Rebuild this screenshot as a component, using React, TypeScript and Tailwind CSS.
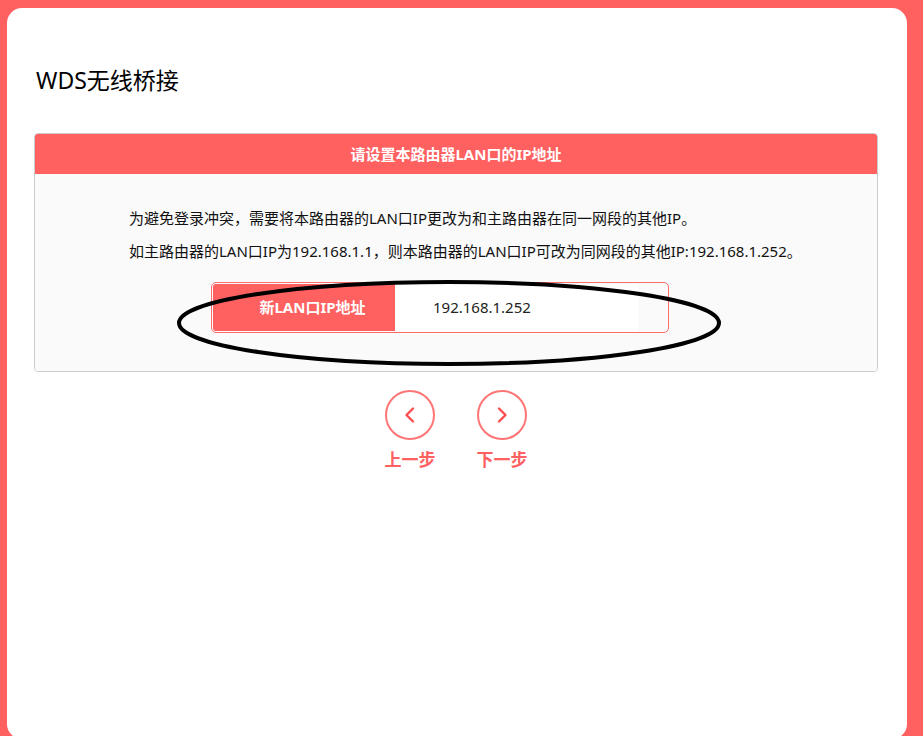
import React from "react";

const font = { fontFamily: '"Noto Sans", "Noto Sans CJK SC", sans-serif' };

function CircleBtn({ dir, label }: { dir: "left" | "right"; label: string }) {
  return (
    <div className="flex flex-col items-center">
      <div className="w-[50px] h-[50px] rounded-full border-2 border-[#ff7575] flex items-center justify-center">
        <svg width="20" height="20" viewBox="0 0 20 20" fill="none">
          {dir === "left" ? (
            <path d="M13 3.5 L6.5 10 L13 16.5" stroke="#ff4d4d" strokeWidth="2.4" strokeLinecap="round" strokeLinejoin="round" />
          ) : (
            <path d="M7 3.5 L13.5 10 L7 16.5" stroke="#ff4d4d" strokeWidth="2.4" strokeLinecap="round" strokeLinejoin="round" />
          )}
        </svg>
      </div>
      <div className="mt-[8px] text-[17px] font-bold leading-[24px] text-[#ff6161]">{label}</div>
    </div>
  );
}

export default function App() {
  return (
    <div className="h-[736px] overflow-hidden bg-[#ff6161] pt-[8px] pl-[7px] pr-[16px]" style={font}>
      <div className="h-[731px] rounded-[15px] bg-white pt-[52px] pl-[27px] pr-[29px]">
        <div className="text-[23px] leading-[40px] text-black pl-[2px]">WDS无线桥接</div>
        <div className="mt-[33px] rounded-[4px] border border-[#cccccc] overflow-hidden">
          <div className="h-[40px] bg-[#ff6161] flex items-center justify-center text-white font-bold text-[15px]">
            请设置本路由器LAN口的IP地址
          </div>
          <div className="bg-[#fafafa] pt-[28px] pb-[38px]">
            <div className="pl-[94px] text-[15px] leading-[33px] text-[#111]">
              <div>为避免登录冲突，需要将本路由器的LAN口IP更改为和主路由器在同一网段的其他IP。</div>
              <div>如主路由器的LAN口IP为192.168.1.1，则本路由器的LAN口IP可改为同网段的其他IP:192.168.1.252。</div>
            </div>
            <div className="relative ml-[176px] mt-[14px] w-[458px] h-[51px] rounded-[5px] border border-[#ff6a6a] p-[1px] flex">
              <div className="w-[182px] h-full bg-[#ff6161] rounded-l-[3px] flex items-center justify-center pl-[17px] text-white font-bold text-[15px]">
                新LAN口IP地址
              </div>
              <div className="w-[243px] h-full bg-white flex items-center pl-[38px] text-[15px] text-[#222]">
                192.168.1.252
              </div>
              <svg className="absolute left-[-37px] top-[-6px] pointer-events-none" width="548" height="92" viewBox="0 0 548 92" fill="none">
                <ellipse cx="274" cy="46" rx="270" ry="41" stroke="#000" strokeWidth="4" />
              </svg>
            </div>
          </div>
        </div>
        <div className="mt-[18px] flex justify-center gap-[41px]">
          <CircleBtn dir="left" label="上一步" />
          <CircleBtn dir="right" label="下一步" />
        </div>
      </div>
    </div>
  );
}
